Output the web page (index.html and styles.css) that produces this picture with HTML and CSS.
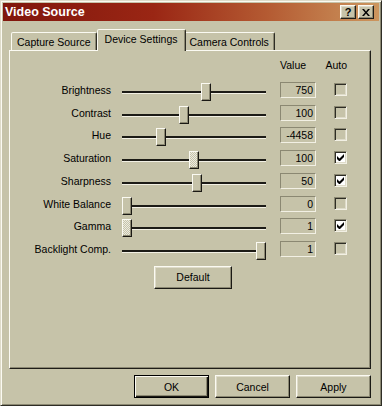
FILE: index.html
```html
<!DOCTYPE html>
<html>
<head>
<meta charset="utf-8">
<title>Video Source</title>
<link rel="stylesheet" href="styles.css">
</head>
<body>
<div class="window">
  <div class="titlebar">
    <span class="title">Video Source</span>
    <div class="title-btns">
      <div class="tbtn help">?</div>
      <div class="tbtn"><svg width="8" height="7" viewBox="0 0 8 7"><path d="M0 0h2l2 2.4L6 0h2L5 3.5 8 7H6L4 4.6 2 7H0l3-3.5z" fill="#000"/></svg></div>
    </div>
  </div>
  <div class="body">
    <div class="tabs">
      <div class="tab">Capture Source</div>
      <div class="tab active">Device Settings</div>
      <div class="tab">Camera Controls</div>
    </div>
    <div class="panel">
      <div class="grid">
        <div class="hdr"><span>Value</span><span>Auto</span></div>

        <div class="label">Brightness</div>
        <div class="slider"><div class="track"></div><div class="thumb" style="left: calc((100% - 10px) * 0.59)"></div></div>
        <div class="value">750</div>
        <div class="check"></div>

        <div class="label">Contrast</div>
        <div class="slider"><div class="track"></div><div class="thumb" style="left: calc((100% - 10px) * 0.425)"></div></div>
        <div class="value">100</div>
        <div class="check"></div>

        <div class="label">Hue</div>
        <div class="slider"><div class="track"></div><div class="thumb" style="left: calc((100% - 10px) * 0.254)"></div></div>
        <div class="value">-4458</div>
        <div class="check"></div>

        <div class="label">Saturation</div>
        <div class="slider"><div class="track"></div><div class="thumb hatch" style="left: calc((100% - 10px) * 0.5)"></div></div>
        <div class="value">100</div>
        <div class="check on"><svg width="7" height="7" viewBox="0 0 7 7"><path d="M0 2L2.5 4.5L7 0V3L2.5 7.5L0 5Z" fill="#000"/></svg></div>

        <div class="label">Sharpness</div>
        <div class="slider"><div class="track"></div><div class="thumb" style="left: calc((100% - 10px) * 0.522)"></div></div>
        <div class="value">50</div>
        <div class="check on"><svg width="7" height="7" viewBox="0 0 7 7"><path d="M0 2L2.5 4.5L7 0V3L2.5 7.5L0 5Z" fill="#000"/></svg></div>

        <div class="label">White Balance</div>
        <div class="slider"><div class="track"></div><div class="thumb" style="left: calc((100% - 10px) * 0)"></div></div>
        <div class="value">0</div>
        <div class="check"></div>

        <div class="label">Gamma</div>
        <div class="slider"><div class="track"></div><div class="thumb hatch" style="left: calc((100% - 10px) * 0)"></div></div>
        <div class="value">1</div>
        <div class="check on"><svg width="7" height="7" viewBox="0 0 7 7"><path d="M0 2L2.5 4.5L7 0V3L2.5 7.5L0 5Z" fill="#000"/></svg></div>

        <div class="label">Backlight Comp.</div>
        <div class="slider"><div class="track"></div><div class="thumb" style="left: calc((100% - 10px) * 1)"></div></div>
        <div class="value">1</div>
        <div class="check"></div>

        <div class="btn default-btn">Default</div>
      </div>
    </div>
    <div class="actions">
      <div class="btn primary">OK</div>
      <div class="btn">Cancel</div>
      <div class="btn">Apply</div>
    </div>
  </div>
</div>
</body>
</html>
```

FILE: styles.css
```css
body {
  margin: 0;
  background: #c6c3a9;
  font-family: "Liberation Sans", Arial, sans-serif;
  font-size: 10.5px;
  color: #000;
}

.window {
  width: 382px;
  height: 406px;
  box-sizing: border-box;
  background: #c6c3a9;
  border: 1px solid;
  border-color: #dedbc9 #2e2d25 #2e2d25 #dedbc9;
  box-shadow: inset 1px 1px #fbfaf2, inset -1px -1px #8b8872;
  padding: 2px;
  display: flex;
  flex-direction: column;
}

.titlebar {
  height: 18px;
  flex: none;
  display: flex;
  align-items: center;
  justify-content: space-between;
  padding: 0 5px 0 2px;
  background: linear-gradient(to right, #80160c 0%, #9a2614 40%, #b45a32 70%, #cc965e 100%);
  color: #fff;
}

.title {
  font-weight: bold;
  font-size: 12.5px;
}

.title-btns {
  display: flex;
  gap: 2px;
}

.tbtn {
  width: 16px;
  height: 14px;
  box-sizing: border-box;
  background: #c6c3a9;
  border: 1px solid;
  border-color: #fbfaf2 #1e1d18 #1e1d18 #fbfaf2;
  box-shadow: inset -1px -1px #8b8872, inset 1px 1px #dedbc9;
  display: flex;
  align-items: center;
  justify-content: center;
  color: #000;
  font-weight: bold;
  font-size: 11px;
  line-height: 12px;
}

.body {
  flex: 1;
  display: flex;
  flex-direction: column;
  padding: 8px 8px 0 6px;
}

.tabs {
  display: flex;
  align-items: flex-end;
  height: 21px;
  padding-left: 2px;
}

.tab {
  height: 18px;
  box-sizing: border-box;
  padding: 0 5px;
  border: 1px solid;
  border-bottom: none;
  border-color: #fbfaf2 #2e2d25 transparent #fbfaf2;
  border-radius: 2px 2px 0 0;
  box-shadow: inset -1px 0 #8b8872;
  background: #c6c3a9;
  display: flex;
  align-items: center;
  white-space: nowrap;
}

.tab.active {
  height: 22px;
  margin: 0 -2px -1px 0;
  padding: 0 7px 3px;
  position: relative;
  z-index: 1;
}

.panel {
  height: 319px;
  flex: none;
  box-sizing: border-box;
  border: 1px solid;
  border-color: #fbfaf2 #1e1d18 #1e1d18 #fbfaf2;
  box-shadow: inset -1px -1px #8b8872;
  padding: 8px 0 0 10px;
}

.grid {
  display: grid;
  grid-template-columns: 102px 158px 54px 13px;
  grid-template-rows: 16px repeat(8, 16px) auto;
  row-gap: 6.75px;
}

.hdr {
  grid-column: 3 / 5;
  display: flex;
  justify-content: space-between;
  line-height: 13px;
}

.label {
  text-align: right;
  padding-right: 11px;
  line-height: 17px;
  white-space: nowrap;
}

.slider {
  width: 144px;
  height: 16px;
  position: relative;
}

.track {
  margin-top: 9px;
  height: 2px;
  background: #1c1b16;
  border-bottom: 1px solid #f2f0e4;
}

.thumb {
  position: absolute;
  top: 1px;
  width: 10px;
  height: 18px;
  box-sizing: border-box;
  background: #c6c3a9;
  border: 1px solid;
  border-color: #fbfaf2 #1a1914 #1a1914 #fbfaf2;
  box-shadow: inset -1px -1px #8b8872;
}

.thumb.hatch {
  background-color: #c6c3a9;
  background-image: repeating-conic-gradient(#ecebe0 0 25%, #c6c3a9 0 50%);
  background-size: 2px 2px;
}

.value {
  width: 36px;
  height: 16px;
  box-sizing: border-box;
  border: 1px solid;
  border-color: #8b8872 #f2f0e4 #f2f0e4 #8b8872;
  text-align: right;
  padding-right: 2px;
  line-height: 14px;
  color: #000;
}

.check {
  width: 13px;
  height: 13px;
  margin-top: 1px;
  box-sizing: border-box;
  border: 1px solid;
  border-color: #8b8872 #f2f0e4 #f2f0e4 #8b8872;
  box-shadow: inset 1px 1px #2e2d25, inset -1px -1px #dedbc9;
  display: flex;
  align-items: center;
  justify-content: center;
}

.check svg {
  display: block;
}

.check.on {
  background: #fff;
}

.btn {
  width: 75px;
  height: 23px;
  box-sizing: border-box;
  background: #c6c3a9;
  border: 1px solid;
  border-color: #fbfaf2 #1a1914 #1a1914 #fbfaf2;
  box-shadow: inset -1px -1px #8b8872, inset 1px 1px #dedbc9;
  display: flex;
  align-items: center;
  justify-content: center;
}

.btn.primary {
  border-color: #000;
  box-shadow: inset 1px 1px #fbfaf2, inset -1px -1px #1a1914, inset -2px -2px #8b8872;
}

.default-btn {
  grid-column: 2;
  width: 78px;
  margin-left: 32px;
  margin-top: 2px;
}

.actions {
  display: flex;
  justify-content: flex-end;
  gap: 6px;
  margin-top: 6px;
}
```
